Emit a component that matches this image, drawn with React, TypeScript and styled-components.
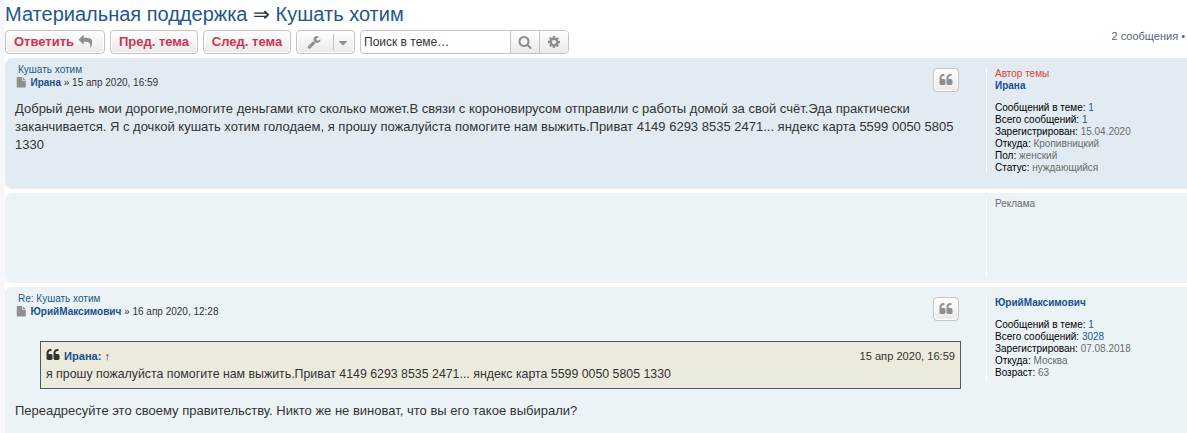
import React from "react";
import styled, { createGlobalStyle } from "styled-components";

const GlobalStyle = createGlobalStyle`
  body {
    margin: 0;
    height: 433px;
    overflow: hidden;
    background-color: #fff;
    color: #333;
    font-family: "Liberation Sans", Arial, sans-serif;
    font-size: 10px;
    line-height: 12px;
  }
`;

const icons = {
  reply:
    "M1792 1120q0 166-127 451-3 7-10.5 24t-13.5 30-13 22q-12 17-28 17-15 0-23.5-10t-8.5-25q0-9 2.5-26.5t2.5-23.5q5-68 5-123 0-112-19.5-200.5t-54-153.5-89-112-119.5-77.5-152-43-178.5-13h-224v256q0 26-19 45t-45 19-45-19l-512-512q-19-19-19-45t19-45l512-512q19-19 45-19t45 19 19 45v256h224q713 0 875 403 53 134 53 333z",
  wrench:
    "M448 1472q0-26-19-45t-45-19-45 19-19 45 19 45 45 19 45-19 19-45zm644-420l-682 682q-37 37-90 37-52 0-91-37l-106-108q-38-36-38-90 0-53 38-91l681-681q39 98 114.5 173.5t173.5 114.5zm634-435q0 39-23 106-47 134-164.5 217.5t-258.5 83.5q-185 0-316.5-131.5t-131.5-316.5 131.5-316.5 316.5-131.5q58 0 121.5 16.5t107.5 46.5q16 11 16 28t-16 28l-293 169v224l193 107q5-3 79-48.5t135.5-81 70.5-35.5q15 0 23.5 10t8.5 25z",
  caret:
    "M1408 704q0 26-19 45l-448 448q-19 19-45 19t-45-19l-448-448q-19-19-19-45t19-45 45-19h896q26 0 45 19t19 45z",
  search:
    "M1216 832q0-185-131.5-316.5t-316.5-131.5-316.5 131.5-131.5 316.5 131.5 316.5 316.5 131.5 316.5-131.5 131.5-316.5zm512 832q0 52-38 90t-90 38q-54 0-90-38l-343-342q-179 124-399 124-143 0-273.5-55.5t-225-150-150-225-55.5-273.5 55.5-273.5 150-225 225-150 273.5-55.5 273.5 55.5 225 150 150 225 55.5 273.5q0 220-124 399l343 343q37 37 37 90z",
  cog: "M1152 896q0-106-75-181t-181-75-181 75-75 181 75 181 181 75 181-75 75-181zm512-109v222q0 12-8 23t-20 13l-185 28q-19 54-39 91 35 50 107 138 10 12 10 25t-9 23q-27 37-99 108t-94 71q-12 0-26-9l-138-108q-44 23-91 38-16 136-29 186-7 28-36 28h-222q-14 0-24.5-8.5t-11.5-21.5l-28-184q-49-16-90-37l-141 107q-10 9-25 9-14 0-25-11-126-114-165-168-7-10-7-23 0-12 8-23 15-21 51-66.5t54-70.5q-27-50-41-99l-183-27q-13-2-21-12.5t-8-23.5v-222q0-12 8-23t19-13l186-28q14-46 39-92-40-57-107-138-10-12-10-24 0-10 9-23 26-36 98.5-107.5t94.5-71.5q13 0 26 10l138 107q44-23 91-38 16-136 29-186 7-28 36-28h222q14 0 24.5 8.5t11.5 21.5l28 184q49 16 90 37l142-107q9-9 24-9 13 0 25 10 129 119 165 170 7 8 7 22 0 12-8 23-15 21-51 66.5t-54 70.5q26 50 41 98l183 28q13 2 21 12.5t8 23.5z",
  file: "M1152 512v-472q22 14 36 28l408 408q14 14 28 36h-472zm-128 32q0 40 28 68t68 28h544v1056q0 40-28 68t-68 28h-1344q-40 0-68-28t-28-68v-1600q0-40 28-68t68-28h800v544z",
  quote:
    "M832 960v384q0 80-56 136t-136 56h-384q-80 0-136-56t-56-136v-704q0-104 40.5-198.5t109.5-163.5 163.5-109.5 198.5-40.5h64q26 0 45 19t19 45v128q0 26-19 45t-45 19h-64q-106 0-181 75t-75 181v32q0 40 28 68t68 28h224q80 0 136 56t56 136zm896 0v384q0 80-56 136t-136 56h-384q-80 0-136-56t-56-136v-704q0-104 40.5-198.5t109.5-163.5 163.5-109.5 198.5-40.5h64q26 0 45 19t19 45v128q0 26-19 45t-45 19h-64q-106 0-181 75t-75 181v32q0 40 28 68t68 28h224q80 0 136 56t56 136z",
};

const Svg = styled.svg`
  display: block;
  flex: none;
  fill: currentColor;
`;

const Icon = ({ name, size = 14 }: { name: keyof typeof icons; size?: number }) => (
  <Svg width={size} height={size} viewBox="0 0 1792 1792">
    <path d={icons[name]} />
  </Svg>
);

const Page = styled.div`
  padding-left: 5px;
  height: 433px;
  overflow: hidden;
  background: linear-gradient(to right, #f5f7fa 4px, #fff 5px);
`;

const Title = styled.h2`
  margin: 0;
  padding-top: 2px;
  height: 28px;
  box-sizing: border-box;
  font-size: 20px;
  line-height: 24px;
  font-weight: 400;
  color: #28313f;
  white-space: nowrap;
`;

const Link = styled.a<{ $bold?: boolean }>`
  color: ${(p) => (p.$bold ? "#1a5090" : "#22578a")};
  font-weight: ${(p) => (p.$bold ? 700 : 400)};
`;

const ActionBar = styled.div`
  display: flex;
  height: 30px;
`;

const Button = styled.a<{ $width: number }>`
  display: flex;
  align-items: center;
  justify-content: center;
  gap: 5px;
  box-sizing: border-box;
  width: ${(p) => p.$width}px;
  height: 24px;
  margin: 2px 5px 0 0;
  padding-bottom: 1px;
  border: 1px solid #c7c3bf;
  border-radius: 4px;
  background: linear-gradient(#fff, #e9e9e9);
  box-shadow: 0 0 0 1px #fff inset;
  color: #d23252;
  font-size: 13px;
  font-weight: 700;
  white-space: nowrap;

  svg {
    color: #8f8f8f;
  }
`;

const ReplyButton = styled(Button)`
  justify-content: flex-start;
  gap: 4px;
  padding-left: 8px;
`;

const ToolsButton = styled(Button)`
  justify-content: flex-start;
  gap: 0;
  padding-left: 10px;
`;

const Caret = styled.span`
  display: flex;
  align-items: center;
  height: 16px;
  margin: 1px 0 0 12px;
  padding: 1px 0 0 2px;
  box-sizing: border-box;
  border-left: 1px solid #c7c3bf;
`;

const SearchBox = styled.div`
  display: flex;
  box-sizing: border-box;
  width: 209px;
  height: 24px;
  margin-top: 2px;
  border: 1px solid #c7c3bf;
  border-radius: 4px;
  overflow: hidden;
`;

const SearchField = styled.div`
  flex: 1;
  padding-left: 3px;
  font-size: 12px;
  line-height: 22px;
`;

const SearchButton = styled.div`
  display: flex;
  align-items: center;
  justify-content: center;
  width: 28px;
  border-left: 1px solid #c7c3bf;
  background: linear-gradient(#fff, #e9e9e9);
  color: #8f8f8f;

  svg {
    margin-top: -1px;
  }
`;

const Pagination = styled.div`
  margin-left: auto;
  padding: 2px 2px 0 0;
  font-size: 11px;
  line-height: 13px;
  color: #536482;
  white-space: nowrap;
`;

const Post = styled.div<{ $height: number; $dark?: boolean }>`
  display: flex;
  box-sizing: border-box;
  height: ${(p) => p.$height}px;
  margin-bottom: 4px;
  padding: 5px 0 0 10px;
  border-radius: 7px 0 0 7px;
  background-color: ${(p) => (p.$dark ? "#e1ebf1" : "#ebf3f7")};
`;

const PostBody = styled.div`
  display: flex;
  flex-direction: column;
  flex: none;
  width: 946px;
`;

const PostHeader = styled.div`
  display: flex;
  justify-content: space-between;
  height: 37px;
`;

const Subject = styled.div`
  padding: 1px 0 0 3px;
  height: 12px;
`;

const Byline = styled.div`
  display: flex;
  align-items: center;
  gap: 4px;
  height: 13px;
`;

const FileIcon = styled.span`
  padding-left: 1px;
  color: #8f8f8f;
`;

const QuoteButton = styled.div`
  display: flex;
  align-items: center;
  justify-content: center;
  box-sizing: border-box;
  width: 26px;
  height: 24px;
  margin: 5px 2px 0 0;
  padding-bottom: 1px;
  border: 1px solid #c7c3bf;
  border-radius: 4px;
  background: linear-gradient(#fff, #e9e9e9);
  box-shadow: 0 0 0 1px #fff inset;
  color: #8f8f8f;
`;

const Content = styled.div`
  font-size: 13px;
  line-height: 18px;
`;

const Quote = styled.blockquote`
  box-sizing: border-box;
  width: 921px;
  height: 48px;
  margin: 12px 0 13px 25px;
  padding: 5px;
  border: 1px solid #4d5b66;
  background-color: #ebeadd;
  font-size: 12.35px;
  line-height: 18px;
  white-space: nowrap;
`;

const Cite = styled.div`
  display: flex;
  align-items: center;
  height: 18px;
  font-size: 11.1px;

  svg {
    margin: -3px 4px 0 0;
  }
`;

const QuoteDate = styled.span`
  margin-left: auto;
`;

const Profile = styled.dl<{ $height: number; $top?: number }>`
  box-sizing: border-box;
  flex: none;
  height: ${(p) => p.$height}px;
  margin: ${(p) => p.$top ?? 5}px 0 0 25px;
  padding-left: 8px;
  border-left: 1px solid #fff;
  color: #6b6b6b;
  white-space: nowrap;

  dt {
    margin-bottom: 10px;
  }

  dd {
    margin: 0;
  }

  dd > b {
    color: #000;
    font-weight: 400;
  }
`;

const Starter = styled.div`
  color: #dd3f43;
`;

type Field = { label: string; value: string; link?: boolean };

const Fields = ({ items }: { items: Field[] }) => (
  <>
    {items.map((f) => (
      <dd key={f.label}>
        <b>{f.label}:</b> {f.link ? <Link>{f.value}</Link> : f.value}
      </dd>
    ))}
  </>
);

const Header = ({ subject, author, date }: { subject: string; author: string; date: string }) => (
  <PostHeader>
    <div>
      <Subject>
        <Link>{subject}</Link>
      </Subject>
      <Byline>
        <FileIcon>
          <Icon name="file" size={10.5} />
        </FileIcon>
        <span>
          <Link $bold>{author}</Link> » {date}
        </span>
      </Byline>
    </div>
    <QuoteButton>
      <Icon name="quote" />
    </QuoteButton>
  </PostHeader>
);

export default function App() {
  return (
    <Page>
      <GlobalStyle />
      <Title>
        <Link>Материальная поддержка</Link> ⇒ <Link>Кушать хотим</Link>
      </Title>
      <ActionBar>
        <ReplyButton $width={100}>
          Ответить <Icon name="reply" />
        </ReplyButton>
        <Button $width={88}>Пред. тема</Button>
        <Button $width={88}>След. тема</Button>
        <ToolsButton $width={59}>
          <Icon name="wrench" />
          <Caret>
            <Icon name="caret" />
          </Caret>
        </ToolsButton>
        <SearchBox>
          <SearchField>Поиск в теме…</SearchField>
          <SearchButton>
            <Icon name="search" />
          </SearchButton>
          <SearchButton>
            <Icon name="cog" />
          </SearchButton>
        </SearchBox>
        <Pagination>2 сообщения •</Pagination>
      </ActionBar>

      <Post $height={131} $dark>
        <PostBody>
          <Header subject="Кушать хотим" author="Ирана" date="15 апр 2020, 16:59" />
          <Content>
            Добрый день мои дорогие,помогите деньгами кто сколько может.В связи с короновирусом
            отправили с работы домой за свой счёт.Эда практически заканчивается. Я с дочкой кушать
            хотим голодаем, я прошу пожалуйста помогите нам выжить.Приват 4149 6293 8535 2471...
            яндекс карта 5599 0050 5805 1330
          </Content>
        </PostBody>
        <Profile $height={105}>
          <dt>
            <Starter>Автор темы</Starter>
            <Link $bold>Ирана</Link>
          </dt>
          <Fields
            items={[
              { label: "Сообщений в теме", value: "1", link: true },
              { label: "Всего сообщений", value: "1", link: true },
              { label: "Зарегистрирован", value: "15.04.2020" },
              { label: "Откуда", value: "Кропивницкий" },
              { label: "Пол", value: "женский" },
              { label: "Статус", value: "нуждающийся" },
            ]}
          />
        </Profile>
      </Post>

      <Post $height={90}>
        <PostBody />
        <Profile $height={80} $top={0}>
          <dd>Реклама</dd>
        </Profile>
      </Post>

      <Post $height={160}>
        <PostBody>
          <Header subject="Re: Кушать хотим" author="ЮрийМаксимович" date="16 апр 2020, 12:28" />
          <Content>
            <Quote>
              <Cite>
                <Icon name="quote" />
                <Link $bold>Ирана:</Link>&nbsp;↑
                <QuoteDate>15 апр 2020, 16:59</QuoteDate>
              </Cite>
              я прошу пожалуйста помогите нам выжить.Приват 4149 6293 8535 2471... яндекс карта 5599
              0050 5805 1330
            </Quote>
            Переадресуйте это своему правительству. Никто же не виноват, что вы его такое выбирали?
          </Content>
        </PostBody>
        <Profile $height={85}>
          <dt>
            <Link $bold>ЮрийМаксимович</Link>
          </dt>
          <Fields
            items={[
              { label: "Сообщений в теме", value: "1", link: true },
              { label: "Всего сообщений", value: "3028", link: true },
              { label: "Зарегистрирован", value: "07.08.2018" },
              { label: "Откуда", value: "Москва" },
              { label: "Возраст", value: "63" },
            ]}
          />
        </Profile>
      </Post>
    </Page>
  );
}
